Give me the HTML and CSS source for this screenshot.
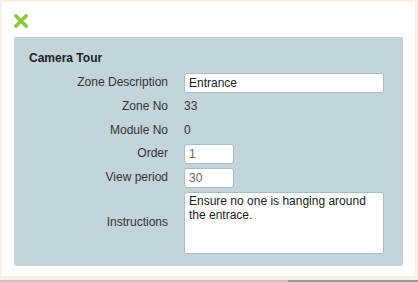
FILE: index.html
```html
<!DOCTYPE html>
<html lang="en">
<head>
    <meta charset="UTF-8">
    <meta name="viewport" content="width=device-width, initial-scale=1.0">
    <title>Camera Tour</title>
    <link rel="stylesheet" href="styles.css">
</head>
<body>
    <div class="dialog">
        <div class="dialog-header">
            <svg class="close-icon" width="14" height="14" viewBox="0 0 14 14">
                <path d="M2 2 L12 12 M12 2 L2 12" stroke="#8cc63f" stroke-width="3.6" stroke-linecap="square" fill="none"/>
            </svg>
        </div>
        <div class="panel">
            <h2 class="panel-title">Camera Tour</h2>
            <div class="form-grid">
                <label for="zone-desc">Zone Description</label>
                <input type="text" id="zone-desc" class="field field-wide" value="Entrance">

                <span class="label">Zone No</span>
                <span class="value">33</span>

                <span class="label">Module No</span>
                <span class="value">0</span>

                <label for="order">Order</label>
                <input type="text" id="order" class="field field-short" value="1">

                <label for="view-period">View period</label>
                <input type="text" id="view-period" class="field field-short" value="30">

                <label for="instructions">Instructions</label>
                <textarea id="instructions" class="field field-area">Ensure no one is hanging around the entrace.</textarea>
            </div>
        </div>
    </div>
    <div class="page-strip">
        <span class="strip-light"></span>
        <span class="strip-dark"></span>
    </div>
</body>
</html>
```

FILE: styles.css
```css
body {
    margin: 0;
    background-color: #fcf0e5;
    font-family: "Liberation Sans", Arial, sans-serif;
    font-size: 12px;
    color: #333;
}

.dialog {
    margin: 2px 3px 0 2px;
    height: 274px;
    box-sizing: border-box;
    background-color: #fff;
    padding: 0 12px 10px 12px;
    display: flex;
    flex-direction: column;
}

.dialog-header {
    height: 35px;
    box-sizing: border-box;
    padding-top: 12px;
}

.close-icon {
    display: block;
}

.panel {
    flex: 1;
    background-color: #c3d4da;
    border-radius: 0 0 3px 3px;
    padding: 14px 15px 0 15px;
}

.panel-title {
    margin: 0 0 8px 0;
    font-size: 12px;
    line-height: 14px;
    font-weight: bold;
    color: #222;
}

.form-grid {
    display: grid;
    grid-template-columns: 139px auto;
    column-gap: 16px;
    row-gap: 4px;
    align-items: center;
}

.form-grid label,
.form-grid .label {
    text-align: right;
    line-height: 19.5px;
}

.value {
    line-height: 19.5px;
}

.field {
    font-family: "Liberation Sans", Arial, sans-serif;
    font-size: 12px;
    color: #222;
    background-color: #fff;
    border: 1px solid #a9bdc8;
    border-radius: 3px;
    box-sizing: border-box;
    height: 20px;
    padding: 0 4px;
    margin: 0;
    outline: none;
}

.field-wide {
    width: 200px;
}

.field-short {
    width: 50px;
    color: #666;
}

.field-area {
    width: 200px;
    height: 62px;
    padding: 1px 4px;
    line-height: 14px;
    resize: none;
    overflow: hidden;
}

.page-strip {
    display: flex;
    margin-top: 4px;
    height: 2px;
}

.strip-light {
    width: 288px;
    background-color: #c4c4c4;
}

.strip-dark {
    flex: 1;
    background-color: #8f9ea6;
}
```
